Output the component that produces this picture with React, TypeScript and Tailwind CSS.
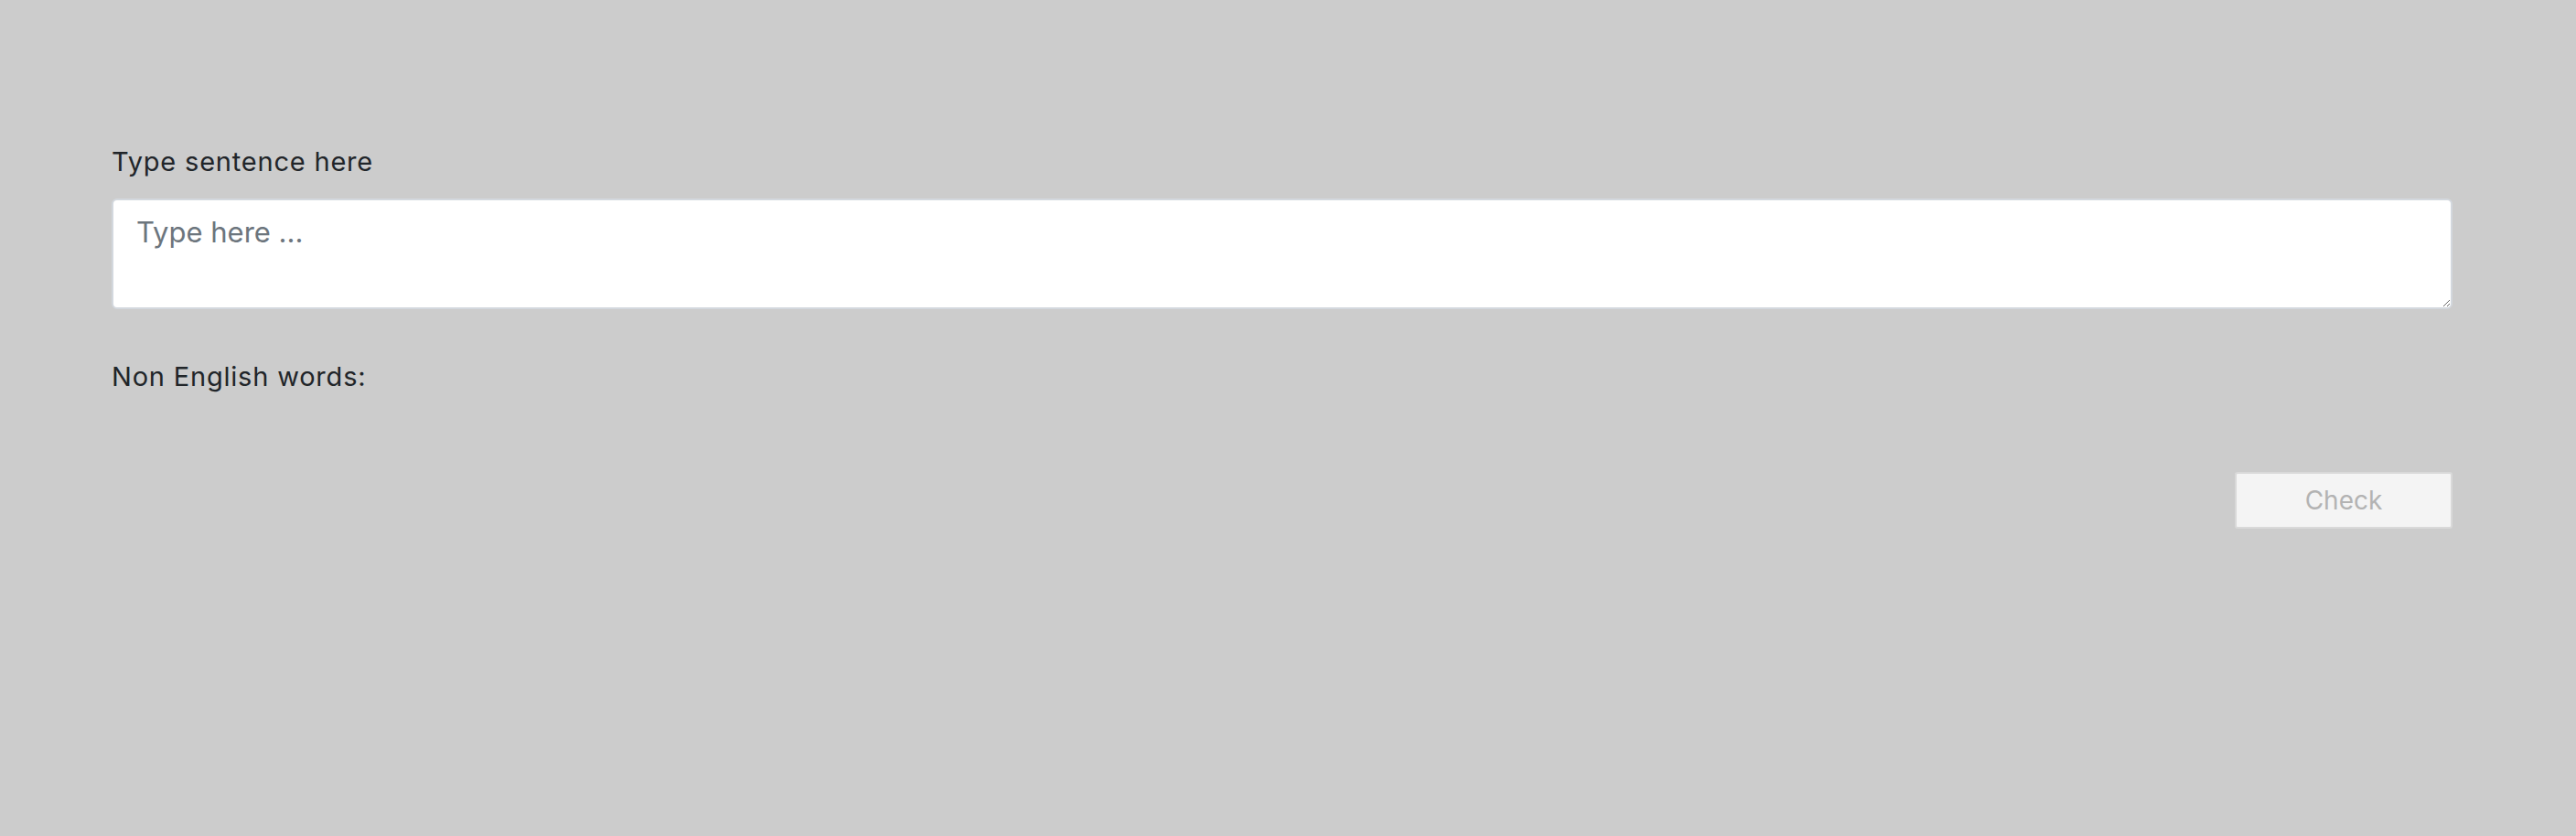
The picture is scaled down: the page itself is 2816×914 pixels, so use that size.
import { useState } from 'react';

export default function App() {
  const [text, setText] = useState('');

  return (
    <div className="min-h-screen bg-[#cccccc] font-['Inter','Liberation_Sans',sans-serif] text-[#212529]">
      <div className="pl-[122px] pt-[157px]">
        <div className="w-[2559px]">
          <label htmlFor="sentence" className="block text-[29px] leading-[40px] tracking-[0.8px]">
            Type sentence here
          </label>
          <textarea
            id="sentence"
            className="mt-[20px] block h-[121px] w-full rounded-[6px] border-2 border-[#d3d8de] bg-white pl-[25px] pr-[19px] pt-[11px] text-[31px] leading-[48px] text-[#212529] outline-none placeholder:text-[#6c757d]"
            placeholder="Type here ..."
            value={text}
            onChange={(e) => setText(e.target.value)}
          />

          <div className="mt-[54px] text-[29px] leading-[40px] tracking-[0.8px]">Non English words:</div>

          <div className="mt-[84px] flex justify-end">
            <button
              disabled={!text.trim()}
              className="h-[62px] w-[238px] rounded-[3px] border-2 border-[#d9d9d9] bg-[#f4f4f4] text-[28px] text-[#b3b3b3]"
            >
              Check
            </button>
          </div>
        </div>
      </div>
    </div>
  );
}
